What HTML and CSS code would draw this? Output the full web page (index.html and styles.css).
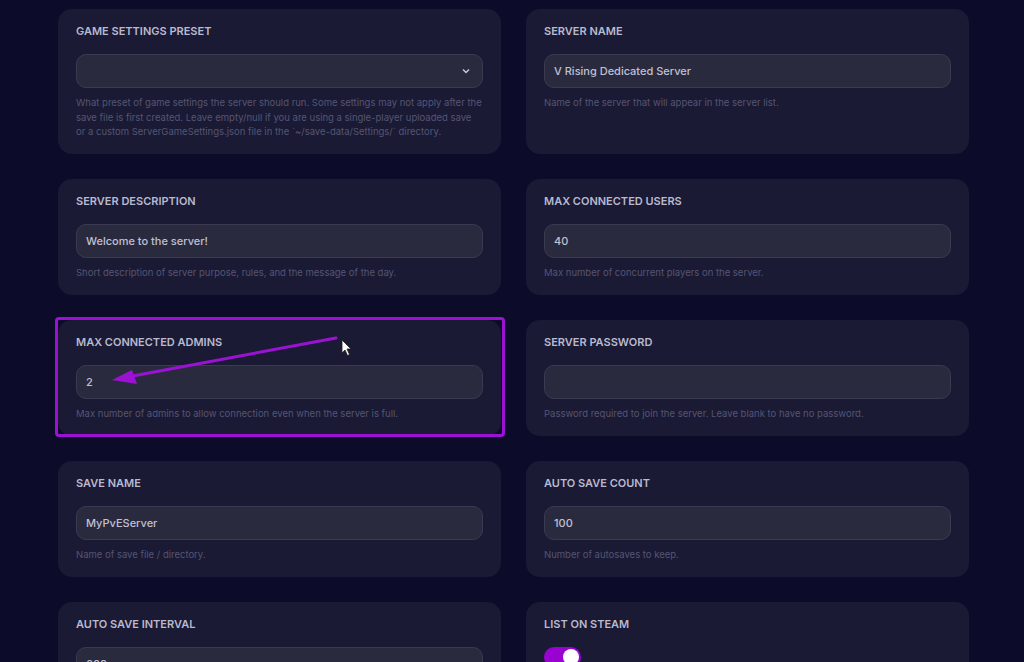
FILE: index.html
```html
<!DOCTYPE html>
<html>
<head>
<meta charset="utf-8">
<link rel="stylesheet" href="styles.css">
</head>
<body>
<div class="page">
  <div class="grid">
    <div class="card">
      <div class="label">Game Settings Preset</div>
      <div class="input select"><span></span>
        <svg class="chev" width="8" height="6" viewBox="0 0 8 6"><path d="M1 1.5 L4 4.5 L7 1.5" fill="none" stroke="#c8c8da" stroke-width="1.5"/></svg>
      </div>
      <div class="help">What preset of game settings the server should run. Some settings may not apply after the save file is first created. Leave empty/null if you are using a single-player uploaded save or a custom ServerGameSettings.json file in the `~/save-data/Settings/` directory.</div>
    </div>
    <div class="card">
      <div class="label">Server Name</div>
      <div class="input">V Rising Dedicated Server</div>
      <div class="help">Name of the server that will appear in the server list.</div>
    </div>
    <div class="card">
      <div class="label">Server Description</div>
      <div class="input">Welcome to the server!</div>
      <div class="help">Short description of server purpose, rules, and the message of the day.</div>
    </div>
    <div class="card">
      <div class="label">Max Connected Users</div>
      <div class="input">40</div>
      <div class="help">Max number of concurrent players on the server.</div>
    </div>
    <div class="card">
      <div class="label">Max Connected Admins</div>
      <div class="input">2</div>
      <div class="help">Max number of admins to allow connection even when the server is full.</div>
    </div>
    <div class="card">
      <div class="label">Server Password</div>
      <div class="input"></div>
      <div class="help">Password required to join the server. Leave blank to have no password.</div>
    </div>
    <div class="card">
      <div class="label">Save Name</div>
      <div class="input">MyPvEServer</div>
      <div class="help">Name of save file / directory.</div>
    </div>
    <div class="card">
      <div class="label">Auto Save Count</div>
      <div class="input">100</div>
      <div class="help">Number of autosaves to keep.</div>
    </div>
    <div class="card">
      <div class="label">Auto Save Interval</div>
      <div class="input">600</div>
      <div class="help">Interval in seconds between autosaves.</div>
    </div>
    <div class="card">
      <div class="label">List on Steam</div>
      <div class="toggle"><div class="knob"></div></div>
      <div class="help">Whether the server is listed on Steam.</div>
    </div>
  </div>
</div>
<div class="highlight"></div>
<svg class="annot" width="1024" height="662" viewBox="0 0 1024 662">
  <line x1="336" y1="338" x2="122" y2="378" stroke="#9c12d4" stroke-width="3" stroke-linecap="round"/>
  <path d="M112 380 L132 370 L137 384 Z" fill="#9c12d4"/>
  <path d="M342 340 L342 353 L345 350 L347.5 355.5 L349.5 354.5 L347 349 L351 349 Z" fill="#ffffff" stroke="#222" stroke-width="0.8" stroke-linejoin="round"/>
</svg>
</body>
</html>
```
FILE: styles.css
```css
html, body {
  margin: 0;
  padding: 0;
  background: #0c0c2a;
  height: 662px;
  overflow: hidden;
}
body {
  font-family: Inter, "Noto Sans", sans-serif;
  position: relative;
}
.page {
  padding: 9px 55px 0 58px;
}
.grid {
  display: grid;
  grid-template-columns: 443px 443px;
  column-gap: 25px;
  row-gap: 25px;
}
.card {
  background: #1a1a34;
  border-radius: 14px;
  padding: 15px 18px 14.5px 18px;
}
.label {
  font-size: 11px;
  line-height: 14px;
  font-weight: 600;
  text-transform: uppercase;
  color: #b9b9cf;
  margin-bottom: 16px;
}
.input {
  box-sizing: border-box;
  height: 34px;
  background: #2a2a3e;
  border: 1px solid #3a3a52;
  border-radius: 10px;
  padding: 0 9px;
  display: flex;
  align-items: center;
  font-size: 11px;
  font-weight: 500;
  color: #c0c0d4;
}
.select {
  justify-content: space-between;
  padding-right: 12px;
}
.help {
  margin-top: 8px;
  font-size: 9.5px;
  line-height: 14.5px;
  color: #555573;
}
.toggle {
  width: 37px;
  height: 20px;
  border-radius: 10px;
  background: #9a02d2;
  position: relative;
}
.knob {
  position: absolute;
  right: 2px;
  top: 2px;
  width: 16px;
  height: 16px;
  border-radius: 50%;
  background: #ffffff;
}
.highlight {
  position: absolute;
  left: 55px;
  top: 317px;
  width: 444px;
  height: 114px;
  border: 3px solid #9c12d4;
  border-radius: 4px;
}
.annot {
  position: absolute;
  left: 0;
  top: 0;
}
```
